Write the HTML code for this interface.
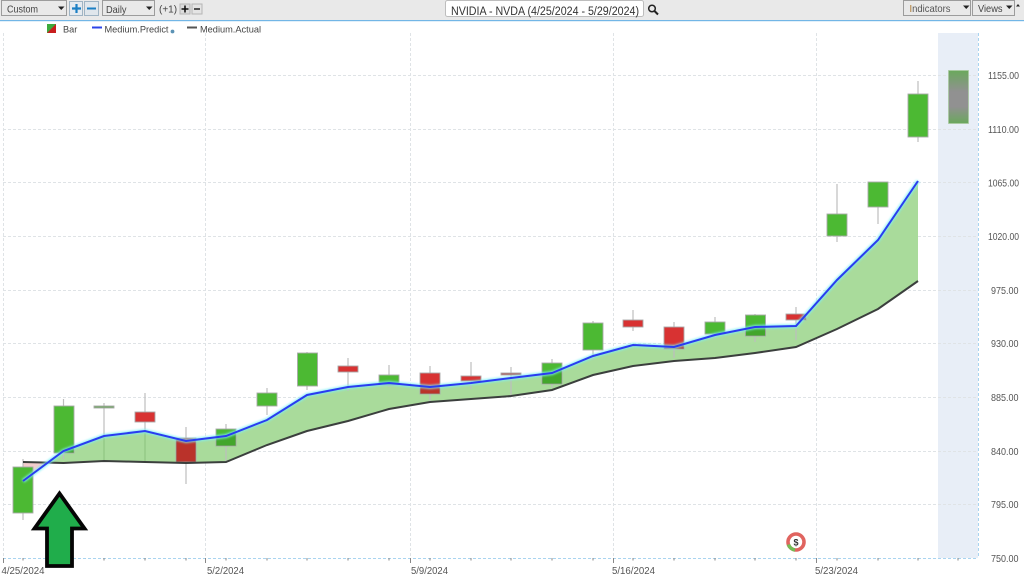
<!DOCTYPE html>
<html><head><meta charset="utf-8"><style>
html,body{margin:0;padding:0;background:#fff}
body{width:1024px;height:581px;overflow:hidden;position:relative;font-family:"Liberation Sans",sans-serif}
svg{position:absolute;left:0;top:0;filter:blur(.3px)}
text{font-family:"Liberation Sans",sans-serif}
</style></head><body>
<svg width="1024" height="581" viewBox="0 0 1024 581" xmlns="http://www.w3.org/2000/svg">
<defs>
<linearGradient id="pg" x1="0" y1="0" x2="0" y2="1"><stop offset="0" stop-color="#6aa85c"/><stop offset=".4" stop-color="#919191"/><stop offset=".68" stop-color="#919191"/><stop offset="1" stop-color="#6aa85c"/></linearGradient>
<filter id="glow" x="-5%" y="-20%" width="110%" height="140%"><feGaussianBlur stdDeviation="1"/></filter>
<clipPath id="bandclip"><path d="M47 463L63.500 451L104 436L145 431L186 441L226 436L267 420L307 395L348 387L389 383L430 387L471 383L511 378L552 373L593 356L633 345L674 347L715 335L755 327L796 326L837 280L878 240L918 181L918 281L878 309L837 329L796 347L755 353L715 358L674 361L633 366L593 375L552 390L511 396L471 399L430 402L389 409L348 421L307 431L267 445L226 462L186 463L145 462L104 461L63.500 463Z"/></clipPath>
</defs>
<rect x="0" y="0" width="1024" height="20" fill="#e9e9e9"/>
<rect x="0" y="20" width="1024" height="1.200" fill="#72b6e6"/>

<!-- toolbar -->
<g fill="#e9e9e9" stroke="#9c9c9c" stroke-width="1">
<rect x="1.500" y="0.500" width="65" height="15"/>
<rect x="102.500" y="0.500" width="52" height="15"/>
<rect x="903.500" y="0.500" width="67" height="15"/>
<rect x="972.500" y="0.500" width="42" height="15"/>
</g>
<rect x="69.500" y="1.500" width="13" height="14" fill="#e4eaf0" stroke="#9fb4c4"/>
<rect x="84.500" y="1.500" width="14" height="14" fill="#dfe6ec" stroke="#9fb4c4"/>
<path d="M72 8.500h9M76.500 4v9" stroke="#1b7fc4" stroke-width="2.200" fill="none"/>
<path d="M87 8.500h9" stroke="#1b7fc4" stroke-width="2" fill="none"/>
<rect x="180" y="4" width="10" height="10" fill="#dcdcdc" stroke="#b5b5b5"/>
<rect x="192" y="4" width="10" height="10" fill="#e4e4e4" stroke="#b5b5b5"/>
<path d="M181.500 9h7M185 5.500v7" stroke="#111" stroke-width="1.600"/>
<path d="M194 9h6" stroke="#222" stroke-width="1.500"/>
<g fill="#222">
<path d="M58 6.500h6.500l-3.250 3.500z"/><path d="M146 6.500h6.500l-3.250 3.500z"/><path d="M963 5.500h6.500l-3.250 3.500z"/><path d="M1006 5.500h6.500l-3.250 3.500z"/><path d="M1016 6.500h4l-2-2.500z"/>
</g>
<text x="7" y="12.500" font-size="10.500" fill="#444" textLength="31" lengthAdjust="spacingAndGlyphs">Custom</text>
<text x="106" y="13" font-size="10.500" fill="#444" textLength="20.500" lengthAdjust="spacingAndGlyphs">Daily</text>
<text x="159" y="12.500" font-size="10" fill="#444">(+1)</text>
<text x="909.500" y="12" font-size="10.500" fill="#555" textLength="41" lengthAdjust="spacingAndGlyphs"><tspan fill="#a8752a">I</tspan>ndicators</text>
<text x="978" y="12" font-size="10.500" fill="#444" textLength="24.500" lengthAdjust="spacingAndGlyphs">Views</text>
<rect x="445.500" y="0.500" width="198" height="16" rx="2" fill="#fff" stroke="#bdbdbd"/>
<text x="451" y="15" font-size="11.500" fill="#333" textLength="188" lengthAdjust="spacingAndGlyphs">NVIDIA - NVDA (4/25/2024 - 5/29/2024)</text>
<circle cx="652" cy="8.500" r="3.300" fill="none" stroke="#222" stroke-width="1.500"/>
<path d="M654.500 11l3.500 3.500" stroke="#222" stroke-width="2"/>

<!-- legend -->
<rect x="47" y="24" width="9" height="9" fill="#c81e1e"/>
<path d="M47 33V24h9z" fill="#3cab3c"/>
<text x="63" y="32.500" font-size="9.200" fill="#444">Bar</text>
<rect x="92" y="26.500" width="10" height="2" fill="#2d45e8"/>
<text x="104.500" y="32.500" font-size="9.200" fill="#444" textLength="64" lengthAdjust="spacingAndGlyphs">Medium.Predict</text>
<circle cx="172.500" cy="31.500" r="1.900" fill="#5c93b5"/>
<rect x="187" y="26.500" width="10" height="2" fill="#555"/>
<text x="200" y="32.500" font-size="9.200" fill="#444" textLength="61" lengthAdjust="spacingAndGlyphs">Medium.Actual</text>

<!-- prediction zone -->
<rect x="938" y="33" width="40" height="525" fill="#e8eef7"/>

<!-- grid -->
<g stroke="#dfe3e6" stroke-width="1" stroke-dasharray="3 2" fill="none">
<path d="M3 75.500H978M3 129.500H978M3 182.500H978M3 236.500H978M3 290.500H978M3 343.500H978M3 397.500H978M3 451.500H978M3 504.500H978"/>
<path d="M3.500 33V558M205.500 33V558M410.500 33V558M613.500 33V558M816.500 33V558"/>
</g>
<path d="M3 558.500H978M978.500 33V558" stroke="#a9d4f0" stroke-width="1" stroke-dasharray="3 2" fill="none"/>

<!-- ticks -->
<path d="M3.500 558v5M23 558v2.500M63.500 558v2.500M104 558v2.500M145 558v2.500M186 558v2.500M205.500 558v5M226 558v2.500M267 558v2.500M307 558v2.500M348 558v2.500M389 558v2.500M410.500 558v5M430 558v2.500M471 558v2.500M511 558v2.500M552 558v2.500M593 558v2.500M613.500 558v5M633 558v2.500M674 558v2.500M715 558v2.500M755 558v2.500M796 558v2.500M816.500 558v5M837 558v2.500M878 558v2.500M918 558v2.500M958 558v2.500" stroke="#888" stroke-width="1"/>

<!-- band -->
<path d="M47 463L63.500 451L104 436L145 431L186 441L226 436L267 420L307 395L348 387L389 383L430 387L471 383L511 378L552 373L593 356L633 345L674 347L715 335L755 327L796 326L837 280L878 240L918 181L918 281L878 309L837 329L796 347L755 353L715 358L674 361L633 366L593 375L552 390L511 396L471 399L430 402L389 409L348 421L307 431L267 445L226 462L186 463L145 462L104 461L63.500 463Z" fill="#a9db9b"/>
<path d="M23 462L47 463L23 481Z" fill="#f3cccc"/>

<!-- wicks -->
<g stroke="#bdbdbd" stroke-width="1.200" fill="none">
<path d="M23 459V520M63.500 399V459M104 403V435M145 393V430M186 427V484M226 424V461M267 388V415M307 352V390M348 358V391M389 365V387M430 366V401M471 362V389M511 367V396M552 359V388M593 321V360M633 310V331M674 322V358M715 317V338M755 314V342M796 307V340M837 184V242M878 182V224M918 81V142"/>
</g>
<path d="M145 431V461M104 436V460" stroke="#8cc07e" stroke-width="1" fill="none"/>

<!-- bodies -->
<g stroke="#a9a9a9" stroke-width="0.900">
<g fill="#4cb933">
<rect x="13" y="467" width="20" height="46"/>
<rect x="54" y="406" width="20" height="47"/>
<rect x="216" y="429" width="20" height="17"/>
<rect x="257" y="393" width="20" height="13"/>
<rect x="297.500" y="353" width="20" height="33"/>
<rect x="379" y="375" width="20" height="10"/>
<rect x="542" y="363" width="20" height="21"/>
<rect x="583" y="323" width="20" height="27"/>
<rect x="705" y="322" width="20" height="12"/>
<rect x="745.500" y="315" width="20" height="21"/>
<rect x="827" y="214" width="20" height="22"/>
<rect x="868" y="182" width="20" height="25"/>
<rect x="908" y="94" width="20" height="43"/>
</g>
<rect x="94" y="406" width="20" height="2" fill="#6da85f"/>
<g fill="#d83232">
<rect x="135" y="412" width="20" height="10"/>
<rect x="176" y="438" width="20" height="24"/>
<rect x="338" y="366" width="20" height="6"/>
<rect x="420" y="373" width="20" height="21"/>
<rect x="461" y="376" width="20" height="5"/>
<rect x="623" y="320" width="20" height="7"/>
<rect x="664" y="327" width="20" height="22"/>
<rect x="786" y="314" width="20" height="6"/>
</g>
<rect x="501" y="373" width="20" height="2" fill="#b05a5a"/>
</g>
<!-- band tint over bodies -->
<g clip-path="url(#bandclip)" fill="#0a3a00" opacity=".14">
<rect x="54" y="406" width="20" height="47"/>
<rect x="176" y="438" width="20" height="24"/>
<rect x="216" y="429" width="20" height="17"/>
<rect x="257" y="393" width="20" height="13"/>
<rect x="379" y="375" width="20" height="10"/>
<rect x="420" y="373" width="20" height="21"/>
<rect x="542" y="363" width="20" height="21"/>
<rect x="583" y="323" width="20" height="27"/>
<rect x="664" y="327" width="20" height="22"/>
<rect x="705" y="322" width="20" height="12"/>
<rect x="745.500" y="315" width="20" height="21"/>
<rect x="786" y="314" width="20" height="6"/>
</g>
<rect x="948.500" y="70.500" width="20" height="53" fill="url(#pg)" stroke="#a9c9a0" stroke-width="0.800"/>

<!-- lines -->
<path d="M23 462L63.500 463L104 461L145 462L186 463L226 462L267 445L307 431L348 421L389 409L430 402L471 399L511 396L552 390L593 375L633 366L674 361L715 358L755 353L796 347L837 329L878 309L918 281" fill="none" stroke="#3b3f3d" stroke-width="2"/>
<path d="M23 481L63.500 451L104 436L145 431L186 441L226 436L267 420L307 395L348 387L389 383L430 387L471 383L511 378L552 373L593 356L633 345L674 347L715 335L755 327L796 326L837 280L878 240L918 181" fill="none" stroke="#7ff0f5" stroke-width="4" opacity=".85" filter="url(#glow)"/>
<path d="M23 481L63.500 451L104 436L145 431L186 441L226 436L267 420L307 395L348 387L389 383L430 387L471 383L511 378L552 373L593 356L633 345L674 347L715 335L755 327L796 326L837 280L878 240L918 181" fill="none" stroke="#2a3cf0" stroke-width="2"/>

<!-- Arrow -->
<path d="M59.500 493.500L84.500 528.500H72V566H47V528.500H34.500Z" fill="#20ad4b" stroke="#050505" stroke-width="3.800" stroke-linejoin="miter"/>

<!-- badge -->
<circle cx="796" cy="542" r="8" fill="none" stroke="#e0645f" stroke-width="3.600"/>
<path d="M788.500 544.500A8 8 0 0 0 795 550" fill="none" stroke="#73bd55" stroke-width="3.600"/>
<circle cx="796" cy="542" r="5.800" fill="#fff"/>
<text x="796" y="545.500" font-size="9" font-weight="bold" fill="#333" text-anchor="middle">$</text>

<!-- y labels -->
<g font-size="10.500" fill="#555">
<text x="988" y="79" textLength="31" lengthAdjust="spacingAndGlyphs">1155.00</text>
<text x="988" y="133" textLength="31" lengthAdjust="spacingAndGlyphs">1110.00</text>
<text x="988" y="186.500" textLength="31" lengthAdjust="spacingAndGlyphs">1065.00</text>
<text x="988" y="240" textLength="31" lengthAdjust="spacingAndGlyphs">1020.00</text>
<text x="991" y="294" textLength="27.500" lengthAdjust="spacingAndGlyphs">975.00</text>
<text x="991" y="347" textLength="27.500" lengthAdjust="spacingAndGlyphs">930.00</text>
<text x="991" y="401" textLength="27.500" lengthAdjust="spacingAndGlyphs">885.00</text>
<text x="991" y="455" textLength="27.500" lengthAdjust="spacingAndGlyphs">840.00</text>
<text x="991" y="508" textLength="27.500" lengthAdjust="spacingAndGlyphs">795.00</text>
<text x="991" y="562" textLength="27.500" lengthAdjust="spacingAndGlyphs">750.00</text>
</g>
<!-- x labels -->
<g font-size="10" fill="#555">
<text x="1.500" y="574" textLength="43" lengthAdjust="spacingAndGlyphs">4/25/2024</text>
<text x="207" y="574" textLength="37" lengthAdjust="spacingAndGlyphs">5/2/2024</text>
<text x="411" y="574" textLength="37" lengthAdjust="spacingAndGlyphs">5/9/2024</text>
<text x="612" y="574" textLength="43" lengthAdjust="spacingAndGlyphs">5/16/2024</text>
<text x="815" y="574" textLength="43" lengthAdjust="spacingAndGlyphs">5/23/2024</text>
</g>
</svg>
</body></html>
